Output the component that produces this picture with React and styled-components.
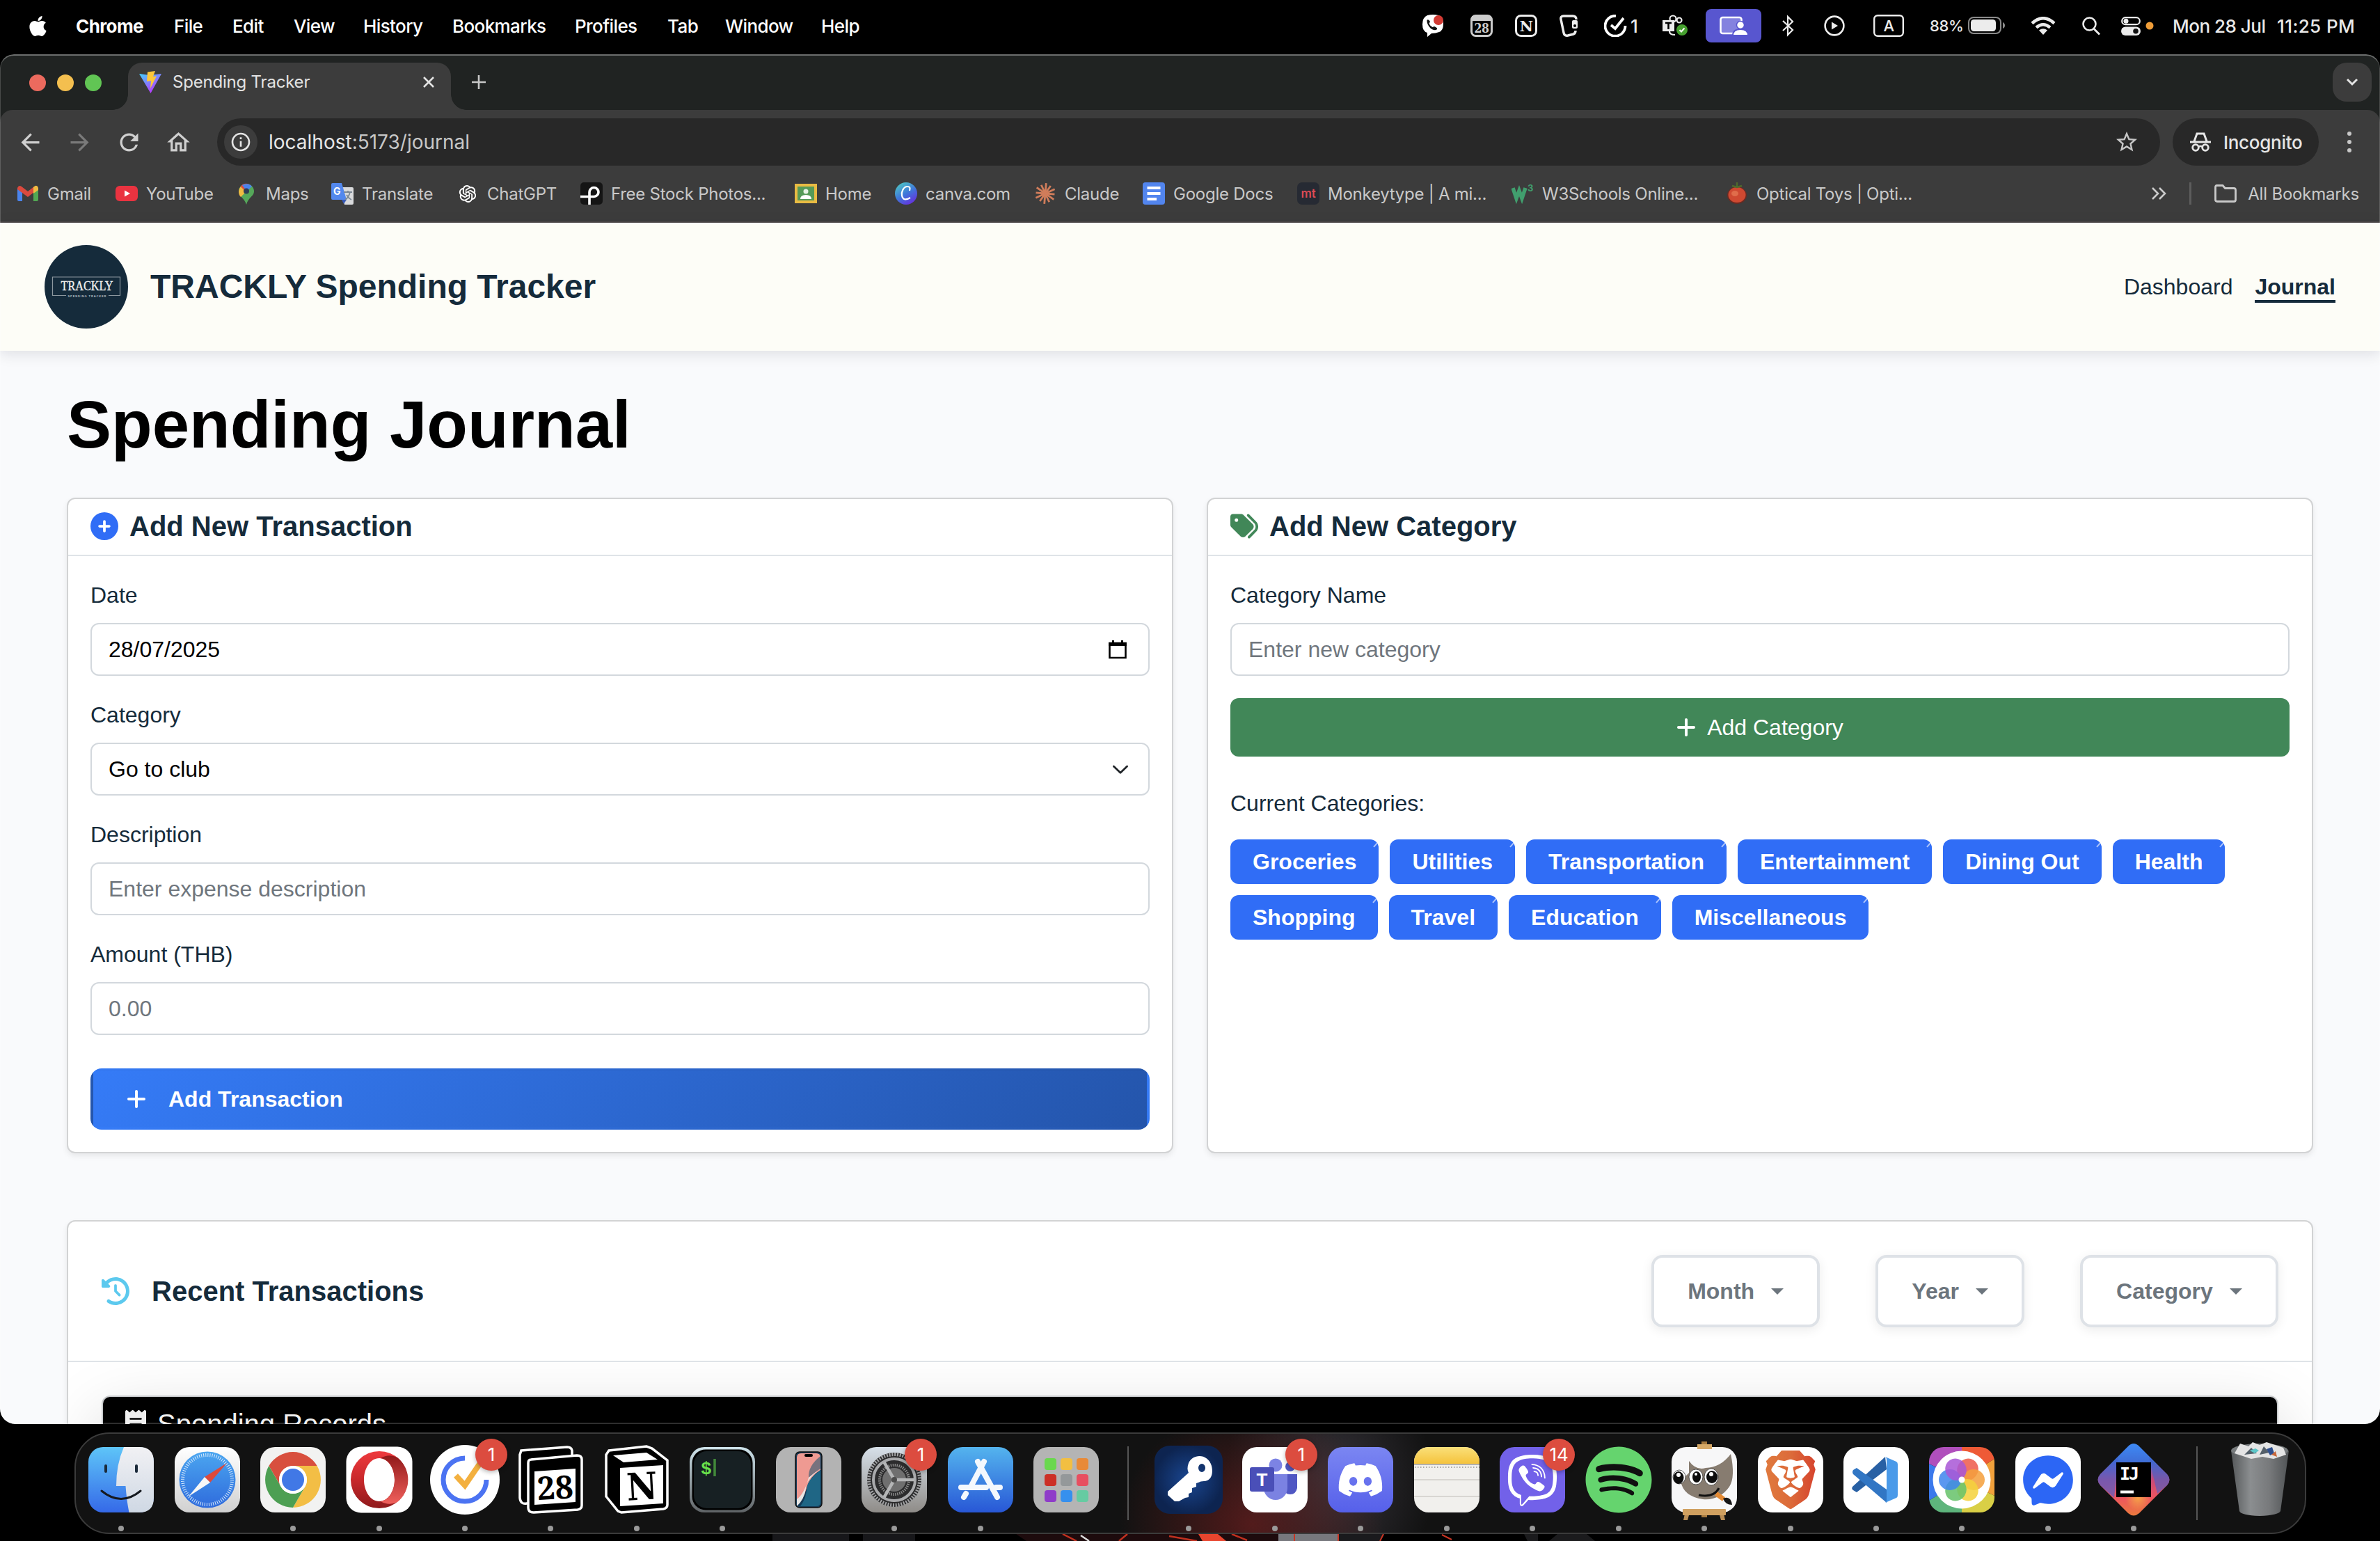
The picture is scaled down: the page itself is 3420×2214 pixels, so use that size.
import React from "react";
import styled, { createGlobalStyle, css } from "styled-components";
import { FaApple, FaDiscord, FaSpotify, FaViber, FaFacebookMessenger } from "react-icons/fa";
import { FaCirclePlus, FaTags, FaPlus, FaClockRotateLeft, FaReceipt } from "react-icons/fa6";
import { MdArrowBack, MdArrowForward, MdRefresh, MdOutlineHome, MdStarBorder, MdInfoOutline } from "react-icons/md";
import { SiBrave } from "react-icons/si";
import { AiOutlineOpenAI } from "react-icons/ai";

const ui = `Inter, "Noto Sans", sans-serif`;
const page = `"Liberation Sans", Arial, sans-serif`;
const navy = "#152b3b";
const blue = "#306df6";
const green = "#418758";

const GlobalStyle = createGlobalStyle`
  *, *::before, *::after { box-sizing: border-box; }
  body { margin: 0; background: #000; overflow: hidden; }
  svg { display: block; flex: none; }
  h1, h2, p { margin: 0; }
`;

const Screen = styled.div`
  width: 3420px;
  height: 2214px;
  display: flex;
  flex-direction: column;
  background: #000;
  overflow: hidden;
  font-family: ${ui};
`;

/* ---------- macOS menu bar ---------- */

const MenuBar = styled.header`
  height: 78px;
  flex: none;
  display: flex;
  align-items: center;
  justify-content: space-between;
  padding: 0 34px 4px 41px;
  color: #fff;
  font-size: 26px;
`;

const MenuGroup = styled.nav`
  display: flex;
  align-items: center;
`;

const MenuItem = styled.span`
  width: ${(p) => p.$w}px;
  flex: none;
  white-space: nowrap;
  font-weight: ${(p) => (p.$bold ? 700 : 500)};
  letter-spacing: ${(p) => p.$ls ?? -0.6}px;
`;

const AppleLogo = styled(FaApple)`
  margin-left: -3px;
`;

const StatusSlot = styled.span`
  width: ${(p) => p.$w}px;
  margin-left: ${(p) => p.$gap}px;
  flex: none;
  display: flex;
  align-items: center;
  justify-content: flex-start;
  white-space: nowrap;
  font-size: ${(p) => p.$size ?? 26}px;
  font-weight: 500;
  letter-spacing: ${(p) => p.$ls ?? -0.5}px;
  color: #e9e9e9;
`;

const ScreenShare = styled.span`
  width: 80px;
  height: 48px;
  margin-left: 26px;
  display: flex;
  align-items: center;
  justify-content: center;
  border-radius: 8px;
  background: #5856cf;
`;

/* ---------- browser ---------- */

const BrowserWindow = styled.section`
  position: relative;
  height: 1968px;
  flex: none;
  display: flex;
  flex-direction: column;
  border-radius: 20px 20px 22px 22px;
  overflow: hidden;
  background: #202322;

  &::after {
    content: "";
    position: absolute;
    inset: 0;
    border-radius: inherit;
    border: 2px solid rgba(255, 255, 255, 0.18);
    border-top-color: rgba(255, 255, 255, 0.34);
    border-left-width: 1px;
    border-right-width: 1px;
    pointer-events: none;
  }
`;

const TabStrip = styled.div`
  height: 80px;
  flex: none;
  display: flex;
  align-items: flex-start;
  padding: 12px 12px 0 42px;
`;

const Lights = styled.div`
  display: flex;
  gap: 16px;
  padding-top: 17px;
  width: 142px;
`;

const Light = styled.i`
  width: 24px;
  height: 24px;
  border-radius: 50%;
  background: ${(p) => p.$c};
`;

const Tab = styled.div`
  position: relative;
  width: 464px;
  height: 68px;
  display: flex;
  align-items: center;
  padding: 0 24px 13px 16px;
  border-radius: 20px 20px 0 0;
  background: #3c3c3c;
  color: #e3e3e3;
  font-size: 24px;

  &::before,
  &::after {
    content: "";
    position: absolute;
    bottom: 0;
    width: 22px;
    height: 22px;
  }
  &::before {
    left: -22px;
    background: radial-gradient(circle at 0 0, transparent 21.5px, #3c3c3c 22px);
  }
  &::after {
    right: -22px;
    background: radial-gradient(circle at 100% 0, transparent 21.5px, #3c3c3c 22px);
  }
`;

const TabTitle = styled.span`
  flex: 1;
  margin-left: 16px;
  letter-spacing: -0.2px;
`;

const NewTab = styled.span`
  margin: 18px 0 0 30px;
`;

const TabSearch = styled.span`
  width: 56px;
  height: 56px;
  margin-left: auto;
  display: flex;
  align-items: center;
  justify-content: center;
  border-radius: 20px;
  background: #3c3c3c;
`;

const Toolbar = styled.div`
  height: 162px;
  flex: none;
  padding-top: 12px;
  border-radius: 18px 18px 0 0;
  border-bottom: 2px solid #4a4646;
  background: #3c3c3c;
`;

const AddressRow = styled.div`
  height: 68px;
  display: flex;
  align-items: center;
  padding: 0 28px 0 24px;
`;

const NavButtons = styled.div`
  width: 288px;
  display: flex;
  gap: 32px;
  color: #cfcfcf;
`;

const NavIcon = styled.span`
  opacity: ${(p) => (p.$dim ? 0.42 : 1)};
`;

const Omnibox = styled.div`
  flex: 1;
  height: 68px;
  display: flex;
  align-items: center;
  padding: 0 30px 0 10px;
  border-radius: 34px;
  background: #282828;
  color: #c7c7c7;
  font-size: 28px;
  letter-spacing: 0;
`;

const SiteInfo = styled.span`
  width: 48px;
  height: 48px;
  margin-right: 16px;
  display: flex;
  align-items: center;
  justify-content: center;
  border-radius: 50%;
  background: #3c3c3c;
  color: #e3e3e3;
`;

const Host = styled.b`
  font-weight: 400;
  color: #e6e6e6;
`;

const Push = styled.span`
  margin-left: auto;
`;

const Incognito = styled.div`
  width: 210px;
  height: 68px;
  margin: 0 32px 0 18px;
  display: flex;
  align-items: center;
  gap: 18px;
  padding-left: 25px;
  border-radius: 34px;
  background: #282828;
  color: #e6e6e6;
  font-size: 26px;
  font-weight: 500;
  letter-spacing: -0.3px;
`;

const BookmarkRow = styled.div`
  height: 80px;
  display: flex;
  align-items: center;
  padding: 0 30px 0 24px;
  color: #c9c9c9;
  font-size: 24px;
`;

const Bookmark = styled.span`
  width: ${(p) => p.$w}px;
  flex: none;
  display: flex;
  align-items: center;
  gap: 12px;
  white-space: nowrap;
  letter-spacing: ${(p) => p.$ls ?? -0.25}px;
`;

const BookmarkEnd = styled.span`
  margin-left: auto;
  display: flex;
  align-items: center;
  white-space: nowrap;
`;

const Separator = styled.i`
  width: 3px;
  height: 32px;
  margin: 0 33px;
  background: #5d5d5d;
`;

const FolderLabel = styled.span`
  margin-left: 16px;
  letter-spacing: -0.2px;
`;

/* ---------- web page ---------- */

const WebPage = styled.main`
  height: 1728px;
  flex: none;
  display: flex;
  flex-direction: column;
  background: #f9fafc;
  color: ${navy};
  font-family: ${page};
  font-size: 32px;
  line-height: 48px;
`;

const SiteHeader = styled.header`
  position: relative;
  height: 184px;
  flex: none;
  display: flex;
  align-items: center;
  padding: 0 64px;
  background: #fdfdf7;
  box-shadow: 0 4px 20px rgba(20, 20, 40, 0.12);
`;

const Brand = styled.span`
  flex: 1;
  margin-left: 32px;
  font-size: 48px;
  font-weight: 700;
`;

const NavLink = styled.a`
  margin-left: 32px;
  line-height: 38px;
  font-weight: ${(p) => (p.$active ? 700 : 400)};
  border-bottom: 4px solid ${(p) => (p.$active ? navy : "transparent")};
  margin-top: 4px;
`;

const Content = styled.div`
  display: flex;
  flex-direction: column;
  padding: 48px 96px 0;
`;

const PageTitle = styled.h1`
  height: 115px;
  margin-bottom: 48px;
  color: #000;
  font-size: 96px;
  line-height: 115px;
  font-weight: 700;
`;

const Columns = styled.div`
  display: grid;
  grid-template-columns: 1fr 1fr;
  gap: 48px;
  height: 942px;
`;

const Card = styled.section`
  display: flex;
  flex-direction: column;
  border: 2px solid #d2d3d4;
  border-radius: 12px;
  background: #fff;
  box-shadow: 0 4px 8px rgba(0, 0, 0, 0.075);
`;

const CardHeader = styled.h2`
  height: 82px;
  display: flex;
  align-items: center;
  gap: 16px;
  padding: 0 32px 2px;
  border-bottom: 2px solid #dfe3e8;
  font-size: 40px;
  font-weight: 700;
`;

const CardBody = styled.div`
  display: flex;
  flex-direction: column;
  padding: 32px;
`;

const Field = styled.label`
  display: flex;
  flex-direction: column;
  gap: 16px;
  margin-bottom: 32px;
`;

const controlBox = css`
  width: 100%;
  height: 76px;
  padding: 0 24px;
  border: 2px solid #d3d8dd;
  border-radius: 12px;
  background: #fff;
  color: #000;
  font: 32px/48px ${page};
`;

const Input = styled.input`
  ${controlBox}
  &::placeholder {
    color: #6f767d;
    opacity: 1;
  }
`;

const Picker = styled.div`
  ${controlBox}
  display: flex;
  align-items: center;
  justify-content: space-between;
`;

const PlusIcon = styled(FaPlus)`
  width: 28px;
`;

const ReceiptIcon = styled(FaReceipt)`
  width: 30px;
`;

const GradientButton = styled.button`
  height: 88px;
  margin-top: 16px;
  display: flex;
  align-items: center;
  gap: 32px;
  padding: 0 48px;
  border: 4px solid transparent;
  border-radius: 16px;
  background: linear-gradient(135deg, #357bf7, #2455ab);
  color: #fff;
  font: 700 32px/48px ${page};
`;

const GreenButton = styled.button`
  height: 84px;
  display: flex;
  align-items: center;
  justify-content: center;
  gap: 16px;
  border: 0;
  border-radius: 12px;
  background: ${green};
  color: #fff;
  font: 32px/48px ${page};
`;

const ListCaption = styled.p`
  margin: 43px 0 28px;
`;

const ChipList = styled.div`
  display: flex;
  flex-wrap: wrap;
  gap: 16px;
`;

const Chip = styled.span`
  position: relative;
  height: 64px;
  padding: 0 32px;
  border-radius: 12px;
  background: ${blue};
  color: #fff;
  font-weight: 700;
  line-height: 64px;

  &::after {
    content: "";
    position: absolute;
    top: 3px;
    right: 3px;
    width: 2px;
    height: 9px;
    background: rgba(255, 255, 255, 0.6);
    transform: rotate(42deg);
  }
`;

const RecentCard = styled(Card)`
  height: 700px;
  margin-top: 96px;
`;

const RecentHeader = styled.div`
  height: 202px;
  flex: none;
  display: flex;
  align-items: center;
  padding: 0 48px;
  border-bottom: 2px solid #dfe3e8;
`;

const RecentTitle = styled.h2`
  flex: 1;
  margin-left: 32px;
  font-size: 40px;
  font-weight: 700;
`;

const FilterGroup = styled.div`
  display: flex;
  gap: 80px;
`;

const Filter = styled.button`
  height: 104px;
  display: flex;
  align-items: center;
  gap: 24.200px;
  padding: 0 48px;
  border: 4px solid #dee2e7;
  border-radius: 16px;
  background: #fff;
  box-shadow: 0 4px 16px rgba(0, 0, 0, 0.08);
  color: #6c757d;
  font: 700 32px/48px ${page};

  &::after {
    content: "";
    border: 9.6px solid transparent;
    border-top-color: currentColor;
    border-bottom: 0;
  }
`;

const RecentBody = styled.div`
  flex: 1;
  padding: 48px;
  overflow: hidden;
`;

const Records = styled.section`
  height: 500px;
  border: 2px solid #c9cbcd;
  border-radius: 12px;
  overflow: hidden;
  background: #fff;
  box-shadow: 0 32px 96px rgba(0, 0, 0, 0.175);
`;

const RecordsHeader = styled.div`
  height: 80px;
  display: flex;
  align-items: center;
  gap: 16px;
  padding: 0 32px 2px;
  background: #000;
  color: #efefef;
  font-size: 40px;
`;

/* ---------- dock ---------- */

const DockArea = styled.footer`
  flex: 1;
  display: flex;
  flex-direction: column;
  align-items: center;
  padding-top: 12px;
`;

const Dock = styled.div`
  width: 3207px;
  height: 146px;
  flex: none;
  display: flex;
  padding: 0 4px;
  border: 2px solid #3b3b3b;
  border-radius: 50px;
  background:
    radial-gradient(ellipse 190px 170px at 1690px 130px, rgba(92, 28, 28, 0.85), transparent),
    radial-gradient(ellipse 150px 180px at 1800px 70px, rgba(70, 66, 76, 0.7), transparent),
    #121212;
`;

const DockCell = styled.div`
  width: 123.45px;
  flex: none;
  display: flex;
  flex-direction: column;
  align-items: center;
  padding-top: 18px;
`;

const IconHolder = styled.div`
  position: relative;
  width: 100px;
  height: 100px;

  & > svg {
    overflow: visible;
  }
`;

const Dot = styled.i`
  width: 8px;
  height: 8px;
  margin-top: 14px;
  border-radius: 50%;
  background: #9a9a9a;
`;

const Badge = styled.span`
  position: absolute;
  top: -11px;
  left: 65px;
  width: 46px;
  height: 46px;
  border-radius: 50%;
  background: #dc4c3f;
  color: #fff;
  font-size: 26px;
  line-height: 46px;
  text-align: center;
  box-shadow: 0 2px 6px rgba(0, 0, 0, 0.3);
`;

const DockDivider = styled.i`
  width: 2px;
  height: 106px;
  margin: 18px ${(p) => p.$r}px 0 ${(p) => p.$l}px;
  flex: none;
  background: #555;
`;

const Favicon = ({ children, box = 32 }) => (
  <svg width="32" height="32" viewBox={`0 0 ${box} ${box}`}>{children}</svg>
);

const menu = [
  ["Chrome", 141, true], ["File", 84], ["Edit", 88], ["View", 100], ["History", 128],
  ["Bookmarks", 176], ["Profiles", 133], ["Tab", 83], ["Window", 138], ["Help", 70],
];

const ViteIcon = () => (
  <Favicon>
    <defs>
      <linearGradient id="vt" x1="0" y1="0" x2="0.6" y2="1"><stop offset="0" stopColor="#41d1ff" /><stop offset="1" stopColor="#bd34fe" /></linearGradient>
    </defs>
    <path d="M0 4 L15 6 L32 4 L16.5 32Z" fill="url(#vt)" />
    <path d="M12 1.5 L23 0 L20 8 L25 7.500 L16 25 L17 14 L11 15Z" fill="#fcc63a" />
  </Favicon>
);

const rays = Array.from({ length: 12 }, (_, i) => i * 30 + 5);

const bookmarks = [
  ["Gmail", 142, <Favicon><path d="M1 8v17q0 2 2 2h5V13z" fill="#4a84ec" /><path d="M31 8v17q0 2-2 2h-5V13z" fill="#52a853" /><path d="M1 8q2-5 6-2l9 7 9-7v8l-9 7-15-11z" fill="#db4a3e" /><path d="M24 7q5-5 7 1v3l-7 5z" fill="#f0bb42" /></Favicon>],
  ["YouTube", 172, <Favicon><rect y="5" width="32" height="22" rx="6" fill="#ea3340" /><path d="M13 11.500v9l8-4.500z" fill="#fff" /></Favicon>],
  ["Maps", 138, <Favicon><path d="M5 13a11 11 0 0 1 22 0c0 7-8 8-11 19C13 22 5 20 5 13z" fill="#55a85a" /><path d="M5 13a11 11 0 0 1 3-7l8 7-8 8q-3-3-3-8z" fill="#f0bb42" /><path d="M7.500 6A11 11 0 0 1 20 2.700L13 11z" fill="#dc4c3f" /><path d="M10 4a11 11 0 0 1 14 1.500L17 13z" fill="#4a84ec" /><circle cx="16" cy="12.500" r="4" fill="#2f3c55" /></Favicon>],
  ["Translate", 180, <Favicon><path d="M13 7h17q2 0 2 2v21q0 2-2 2H19z" fill="#d9dadc" /><path d="M2 1h13l7 24H2q-2 0-2-2V3q0-2 2-2z" fill="#5388ee" /><path d="M15 25h7l-4 6z" fill="#3558b8" /><path d="M18 14h12M24 12v2M27 14q-2 8-7 11M22 18q3 5 7 7" stroke="#7b8794" strokeWidth="1.800" fill="none" /><text x="3" y="18" fontSize="14" fontWeight="700" fill="#fff">G</text></Favicon>],
  ["ChatGPT", 178, <AiOutlineOpenAI size={32} color="#fff" />],
  ["Free Stock Photos...", 308, <Favicon><rect width="32" height="32" rx="5" fill="#151515" /><path d="M13 32V14a6.500 6.500 0 1 1 6.500 6.500H0" stroke="#fff" strokeWidth="3.600" fill="none" /></Favicon>],
  ["Home", 144, <Favicon><rect y="2" width="32" height="28" fill="#e9bb43" /><rect x="4" y="6" width="24" height="20" fill="#569a58" /><circle cx="16" cy="13" r="3.500" fill="#e8f2e6" /><path d="M8 24q0-6 8-6t8 6z" fill="#fff" /></Favicon>],
  ["canva.com", 200, <Favicon><defs><linearGradient id="cv" x1="0.2" y1="0" x2="0.8" y2="1"><stop offset="0" stopColor="#4fc8c4" /><stop offset="0.5" stopColor="#3f77d9" /><stop offset="1" stopColor="#6a2ae0" /></linearGradient></defs><circle cx="16" cy="16" r="16" fill="url(#cv)" /><path d="M21 12q2-6-3-6c-6 0-9 8-8 13q2 9 12 3" stroke="#fff" strokeWidth="2.200" fill="none" /></Favicon>],
  ["Claude", 156, <Favicon>{rays.map((a, i) => <path key={a} d={`M16 16V${i % 2 ? 2.5 : 1}`} stroke="#d07d5b" strokeWidth="2.800" transform={`rotate(${a} 16 16)`} />)}</Favicon>],
  ["Google Docs", 222, <Favicon><rect width="32" height="32" rx="4" fill="#5285ee" /><path d="M6.500 8h19M6.500 16h19M6.500 24H20" stroke="#fff" strokeWidth="4" /></Favicon>],
  ["Monkeytype | A mi...", 308, <Favicon><rect width="32" height="32" rx="7" fill="#262a33" /><text x="16" y="22" textAnchor="middle" fontSize="17" fontWeight="600" fill="#dd4b55">mt</text></Favicon>],
  ["W3Schools Online...", 308, <Favicon><path d="M2 8l5 15 4-11 4 11 5-15" stroke="#419f6e" strokeWidth="5.500" fill="none" /><text x="23" y="13" fontSize="13" fontWeight="700" fill="#419f6e">3</text></Favicon>],
  ["Optical Toys | Opti...", 272, <Favicon><ellipse cx="16" cy="18.500" rx="14" ry="12.500" fill="#6b2a22" /><ellipse cx="16" cy="18" rx="12.500" ry="11" fill="#cf4931" /><ellipse cx="13" cy="16" rx="5" ry="4" fill="#e06d4b" /><path d="M16 0v6M9 5l7 2 7-2" stroke="#4f6a2c" strokeWidth="2.500" fill="none" /></Favicon>],
];

const Sq = ({ fill = "#fff", s = 47 }) => <rect x={-s} y={-s} width={s * 2} height={s * 2} rx={s * 0.45} fill={fill} />;

const Grad = ({ id, stops, x2 = 0, y2 = 1 }) => (
  <linearGradient id={id} x1="0" y1="0" x2={x2} y2={y2}>
    {stops.map((c, i) => <stop key={i} offset={i / (stops.length - 1)} stopColor={c} />)}
  </linearGradient>
);

const chromeWedge = "M-34.600-20A40 40 0 0 1 34.600-20L0-20A20 20 0 0 0-17.300 10Z";

const left = [
  { id: "finder", dot: true, art: <>
    <Grad id="fa" stops={["#5ec5f8", "#3569e8"]} /><Grad id="fb" stops={["#f1f1f4", "#cfd8e4"]} />
    <Sq fill="url(#fa)" />
    <path d="M4-47H26Q47-47 47-26V26Q47 47 26 47H11.500Q8 30 6.500 9H-7Q-7-22 4-47Z" fill="url(#fb)" />
    <path d="M-22-20v8M22-20v8" stroke="#1b2a3a" strokeWidth="4" strokeLinecap="round" />
    <path d="M-28 16Q0 39 28 16" stroke="#15191f" strokeWidth="3" fill="none" strokeLinecap="round" /></> },
  { id: "safari", art: <>
    <Grad id="sa" stops={["#fff", "#d0d0d0"]} /><Grad id="sb" stops={["#4ba6f0", "#2f6bdc"]} />
    <Sq fill="url(#sa)" /><circle r="40.500" fill="url(#sb)" />
    <circle r="35.500" fill="none" stroke="#d9ebfc" strokeWidth="5" strokeDasharray="1 2.100" />
    <path d="M28-24L4 4L-4-4Z" fill="#dd4a3c" /><path d="M-27 24L-4-4L4 4Z" fill="#f7f7f7" /></> },
  { id: "chrome", dot: true, art: <>
    <Sq fill="#f2f2f1" />
    <path d={chromeWedge} fill="#d84f3e" /><path d={chromeWedge} fill="#f3be45" transform="rotate(120)" /><path d={chromeWedge} fill="#4d9f53" transform="rotate(240)" />
    <circle r="20" fill="#fff" /><circle r="16" fill="#4178e6" /></> },
  { id: "opera", dot: true, art: <>
    <Grad id="op" stops={["#ee3a3e", "#c8282b", "#8f1a1c"]} /><Grad id="oq" stops={["#921a1a", "#f0605c"]} />
    <Sq s={47.5} />
    <path fillRule="evenodd" d="M0-41A41 41 0 1 0 0 41A41 41 0 1 0 0-41ZM0-31C13-31 22-16 22 0S13 31 0 31S-22 16-22 0S-13-31 0-31Z" fill="url(#op)" />
    <path d="M2-31Q14-38 26-32A41 41 0 0 1 26 32Q14 38 2 31C14 29 22 16 22 0S14-29 2-31Z" fill="url(#oq)" /></> },
  { id: "ticktick", dot: true, badge: "1", art: <>
    <circle r="50" fill="#fff" />
    <path d="M0-31A31 31 0 1 0 31 0" fill="none" stroke="#4b73f2" strokeWidth="7" />
    <path d="M-13-6L0 8L22-24" fill="none" stroke="#f3b03f" strokeWidth="8" /></> },
  { id: "notioncal", dot: true, art: <>
    <path d="M-42-42L24-47Q30-47 31-42V28L-34 34Q-43 36-44 26V-36Z" fill="#000" stroke="#fff" strokeWidth="3.500" />
    <path d="M-28-29L38-35Q45-35 45-29V37Q45 42 39 43L-24 47Q-32 47-32 40V-24Q-32-29-28-29Z" fill="#000" stroke="#fff" strokeWidth="3.500" />
    <path d="M-23-12L36-16V32L-23 36Z" fill="#fff" />
    <text x="6" y="28" textAnchor="middle" fontFamily="Noto Serif, DejaVu Serif, serif" fontSize="46" fontWeight="700" textLength="52" lengthAdjust="spacingAndGlyphs" transform="rotate(-3)" fill="#000">28</text></> },
  { id: "notion", dot: true, art: <>
    <path d="M-40-42L14-48L22-45L44-28V36Q44 41 38 42L-22 47L-27 45L-44 24V-36Z" fill="#000" stroke="#fff" strokeWidth="3.500" />
    <path d="M-34-35L14-39L30-29L-19-25Z" fill="#fff" /><path d="M-24-17L38-21V34L-24 38Z" fill="#fff" />
    <text x="7" y="29" textAnchor="middle" fontFamily="DejaVu Serif, serif" fontSize="54" fontWeight="700" textLength="44" lengthAdjust="spacingAndGlyphs" transform="rotate(-3)" fill="#000">N</text></> },
  { id: "terminal", dot: true, art: <>
    <Grad id="tm" stops={["#cfe4ec", "#5f6366"]} /><Sq fill="url(#tm)" /><Sq s={43.5} fill="#000" /><Sq s={41} fill="#172023" />
    <text x="-31" y="-8" fontFamily="Liberation Mono, monospace" fontSize="26" fontWeight="700" fill="#68e04b">$</text>
    <path d="M-11-30v25" stroke="#42883a" strokeWidth="3.500" /></> },
  { id: "iphone", art: <>
    <Sq fill="#b3b3b3" /><rect x="-19" y="-40" width="38" height="80" rx="6" fill="#163b58" />
    <path d="M-17-32q0-6 6-6h22q6 0 6 6V-14Q2-5-3 12Q-8 30-17 32Z" fill="#ef9a92" />
    <path d="M17-34Q-1-20 0-3Q8-10 17-16Z" fill="#77727e" /><path d="M17-16Q-4 0-4 12Q-6 28-17 38V28Q-6 20 0-3Q8-10 17-16Z" fill="#e8e6e4" /><path d="M17-14Q-2 0-3 13Q-3 26-12 38H11q6 0 6-6Z" fill="#1f6685" />
    <rect x="-19" y="-40" width="38" height="80" rx="6" fill="none" stroke="#111" strokeWidth="1.500" /><rect x="-6" y="-37" width="12" height="4" rx="2" fill="#000" /></> },
  { id: "settings", dot: true, badge: "1", art: <>
    <Grad id="st" stops={["#d7e0e9", "#8f8c88"]} /><Sq fill="url(#st)" />
    <circle r="39" fill="#2c2c2d" /><circle r="36.500" fill="none" stroke="#a2a3a5" strokeWidth="5" strokeDasharray="2 1.820" /><circle r="30" fill="none" stroke="#a9aaac" strokeWidth="4" />
    <circle r="21" fill="none" stroke="#8a8a8a" strokeWidth="4" strokeDasharray="1.500 1.500" /><circle r="17" fill="#6f6f6f" />
    <path d="M0 0H29M0 0L-14.500-25M0 0L-14.500 25" stroke="#b4b5b6" strokeWidth="4.500" /><circle r="4" fill="#4d4d4d" /></> },
  { id: "appstore", dot: true, art: <>
    <Grad id="as" stops={["#54b4ee", "#2857d6"]} /><Sq fill="url(#as)" />
    <g stroke="#f4f8fd" strokeWidth="8" strokeLinecap="round"><path d="M5-26L-14 10M-4-26L24 25M-28 11H8M22 11H28M-21 20L-24 25" /></g></> },
  { id: "launchpad", art: <>
    <Sq fill="#b4b4b4" />
    {["#6ad84e", "#f2bf42", "#e88a38", "#cc3026", "#94989a", "#e74f60", "#8f3cc9", "#3690ee", "#66cba2"].map((c, i) => (
      <rect key={c} x={-31 + (i % 3) * 23} y={-31 + Math.floor(i / 3) * 23} width="17" height="17" rx="4" fill={c} />))}</> },
];

const petals = ["#ee5a4c", "#f4a03c", "#f4d23c", "#66c36a", "#3f86ee", "#a957d6"];

const right = [
  { id: "key", dot: true, art: <>
    <radialGradient id="ky"><stop offset="0" stopColor="#1a4792" /><stop offset="1" stopColor="#0d2450" /></radialGradient>
    <Sq fill="url(#ky)" s={49} />
    <path fillRule="evenodd" d="M0-24C6-38 28-38 33-20C36-8 32 2 22 2Q17 2 14 4L11 5V10L5 12V18L0 20V25L-5 26L-14 31L-20 31L-30 22V17L0-10Q-3-16 0-24ZM19-23A5 6 0 1 0 19-11A5 6 0 1 0 19-23Z" fill="#fff" /></> },
  { id: "teams", dot: true, badge: "1", art: <>
    <Sq /><circle cx="1" cy="-21" r="9.500" fill="#7c83e4" /><circle cx="22" cy="-19" r="7" fill="#5057c3" />
    <path d="M12-8H32V12Q30 21 22 21T12 12Z" fill="#5057c3" /><path d="M-14-8H18V12A17 17 0 0 1-16 12Z" fill="#7b82e2" />
    <rect x="-36" y="-18" width="35" height="35" rx="3" fill="#4a4fb8" /><text x="-18.500" y="9" textAnchor="middle" fontFamily="Liberation Sans, sans-serif" fontWeight="700" fontSize="26" fill="#fff">T</text></> },
  { id: "discord", dot: true, art: <><Grad id="dc" stops={["#7b86f2", "#5660ea"]} /><Sq fill="url(#dc)" /><FaDiscord x={-34} y={-34} size={68} color="#fff" /></> },
  { id: "notes", dot: true, art: <>
    <clipPath id="nc"><rect x="-47" y="-47" width="94" height="94" rx="21" /></clipPath><Grad id="nt" stops={["#fae07a", "#f5c33c"]} />
    <g clipPath="url(#nc)"><rect x="-47" y="-47" width="94" height="94" fill="#f1f0ed" /><rect x="-47" y="-47" width="94" height="24" fill="url(#nt)" />
      <path d="M-47-22H47" stroke="#b3b0aa" strokeWidth="2" /><path d="M-46-18H47" stroke="#a9a7a2" strokeWidth="2" strokeDasharray="1.500 2.500" /><path d="M-47 0H47M-47 24H47" stroke="#cfcdc9" strokeWidth="1.500" /></g></> },
  { id: "viber", dot: true, badge: "14", art: <><Sq fill="#7261e9" /><FaViber x={-37} y={-36} size={74} color="#fff" /></> },
  { id: "spotify", dot: true, art: <><circle r="46" fill="#101010" /><FaSpotify x={-49} y={-49} size={98} color="#65d46e" /></> },
  { id: "gimp", dot: true, art: <>
    <path d="M-26 40l-4 18h6l5-18zM26 40l4 18h-6l-5-18z" fill="#b98d55" /><rect x="-4" y="-55" width="8" height="109" fill="#a5793f" /><Sq fill="#f7f7f8" />
    <rect x="-10" y="-51" width="21" height="7" fill="#d6a968" /><rect x="-31" y="42" width="62" height="9" rx="1" fill="#d0a060" />
    <path d="M-22-27Q-12-13 2-17Q24-18 38-37Q45-4 36 10Q22 30-2 28Q-30 24-34 2L-22-10Z" fill="#877c70" />
    <g fill="#fff" stroke="#333" strokeWidth="0.800"><ellipse cx="-36" cy="-4" rx="9" ry="10" /><ellipse cx="-12" cy="-4" rx="10" ry="11" /><ellipse cx="10" cy="-4" rx="10" ry="12" /></g>
    <ellipse cx="-37" cy="-3" rx="7.500" ry="9" fill="#0c0c0c" /><ellipse cx="-11" cy="-4" rx="6" ry="8" fill="#0c0c0c" /><ellipse cx="11" cy="-4" rx="8" ry="9" fill="#0c0c0c" /><circle cx="-37" cy="-7" r="3" fill="#fff" /><circle cx="-12" cy="-8" r="2" fill="#fff" /><circle cx="10" cy="-8" r="3" fill="#fff" />
    <path d="M-8 22Q14 26 21 12" stroke="#111" strokeWidth="3" fill="none" /><path d="M17 20L28 28" stroke="#e48a33" strokeWidth="7" /><path d="M27 27Q38 22 40 36Q30 36 27 27Z" fill="#161616" /></> },
  { id: "brave", dot: true, art: <><Grad id="br" x2={1} y2={0} stops={["#e07a3e", "#dc6b3a", "#d6442e"]} /><Sq /><SiBrave x={-42} y={-42} size={84} fill="url(#br)" /></> },
  { id: "vscode", dot: true, art: <>
    <Sq /><path d="M13-33L-34 10Q-36 13-33 15L-28 18L15-15Z" fill="#2860a4" /><path d="M-33-14L-28-17L15 14V33L-33-8Q-35-11-33-14Z" fill="#3176c4" /><path d="M13-33L29-26Q31-25 31-22V22Q31 25 29 26L13 33Q15 32 15 28V-28Q15-32 13-33Z" fill="#4a9ae9" /></> },
  { id: "photos", dot: true, art: <>
    <clipPath id="pc"><rect x="-47" y="-47" width="94" height="94" rx="21" /></clipPath>
    <g clipPath="url(#pc)"><path d="M0 0L-47-23V-47H0Z" fill="#b04fbc" /><path d="M0 0V-47H47V-30Z" fill="#ee5a36" /><path d="M0 0L47-30V23Z" fill="#f1a13c" /><path d="M0 0L47 23V47H0Z" fill="#d9cf46" /><path d="M0 0V47H-47V30Z" fill="#5eb57c" /><path d="M0 0L-47 30V-23Z" fill="#3b79ec" /></g>
    <circle r="41.500" fill="#fff" />
    {petals.map((c, i) => <ellipse key={c} cx="0" cy="-17" rx="15" ry="16" fill={c} opacity="0.86" transform={`rotate(${30 + i * 60})`} />)}
    <circle r="4.500" fill="#fff" /></> },
  { id: "messenger", dot: true, art: <><Sq /><FaFacebookMessenger x={-37} y={-36} size={74} color="#2c66f5" /></> },
  { id: "intellij", dot: true, art: <>
    <Grad id="ij" stops={["#3e8af5", "#3f6fd8", "#c64a78", "#ee5560", "#ea7a3d"]} />
    <radialGradient id="ik"><stop offset="0" stopColor="#f4a545" /><stop offset="1" stopColor="#f4a54500" /></radialGradient>
    <path d="M-8-48Q0-56 8-48L48-8Q55 0 48 8L8 48Q0 55-8 48L-48 8Q-55 0-48-8Z" fill="url(#ij)" />
    <path d="M-22-32L-48-8Q-55 0-48 8L-28 26Z" fill="#4560d0" opacity="0.600" /><path d="M22-32L48-8Q55 0 48 8L34 20Z" fill="#4560c8" opacity="0.600" /><circle cx="6" cy="26" r="18" fill="url(#ik)" />
    <rect x="-25" y="-25" width="50" height="50" fill="#000" /><text x="-20" y="0" fontFamily="DejaVu Sans Mono, monospace" fontWeight="700" fontSize="25" letterSpacing="-2" fill="#fff">IJ</text><path d="M-19 17.500H0" stroke="#fff" strokeWidth="4" /></> },
];

const trash = <>
  <Grad id="tr" x2={1} y2={0} stops={["#55585a", "#8b8e90", "#77797b", "#505355"]} />
  <path d="M-41-42L-29 45Q-27 51 0 52Q27 51 30 45L42-42Q0-26-41-42Z" fill="url(#tr)" />
  <ellipse cy="-42" rx="41" ry="10" fill="#777b7d" />
  <path d="M-36-38L-28-52L-16-48L-10-54L0-50L10-54L22-50L34-46L38-36L20-30L4-33L-12-30Z" fill="#e4e4e4" />
  <path d="M-22-36l10-10 8 8zM0-36l6-12 8 9z" fill="#55606a" /><path d="M-14-42l8-3 5 3-6 4z" fill="#5cc6c8" /><path d="M10-44l8-3 3 9-6 3z" fill="#2f4f8e" /><path d="M17-36l6-5 2 8z" fill="#c8673a" />
</>;

const DockApp = ({ app }) => (
  <DockCell>
    <IconHolder>
      <svg width="100" height="100" viewBox="-50 -48 100 100" overflow="visible">{app.art}</svg>
      {app.badge && <Badge>{app.badge}</Badge>}
    </IconHolder>
    {app.dot && <Dot />}
  </DockCell>
);

const stroke = { fill: "none", stroke: "#ececec", strokeWidth: 3 };

const StatusIcons = () => (
  <MenuGroup>
    <StatusSlot $w={32} $gap={0}><svg width="32" height="32" viewBox="0 0 32 32"><path d="M8 1Q16-1 24 1Q31 3 31 13T25 25Q20 27 14 27L8 32V26Q1 24 1 14T8 1Z" fill="#fff" /><path d="M7.500 8q2-2 4.500 2l-1.500 3q2 4 5 5l2.500-1q5 2 4 4-3 3-9-1Q7 14 7.500 8z" fill="#111" /><circle cx="24" cy="8" r="7" fill="#d23a33" /></svg></StatusSlot>
    <StatusSlot $w={32} $gap={38}><svg width="32" height="32" viewBox="0 0 32 32"><rect x="1.500" y="1.500" width="29" height="29" rx="6" {...stroke} stroke="#ccc" /><path d="M2 2h28v7H2z" fill="#ccc" /><text x="16" y="26" textAnchor="middle" fontFamily="DejaVu Serif, serif" fontWeight="700" fontSize="19" textLength="21" lengthAdjust="spacingAndGlyphs" fill="#ccc">28</text></svg></StatusSlot>
    <StatusSlot $w={32} $gap={32}><svg width="32" height="32" viewBox="0 0 32 32"><rect x="1.500" y="1.500" width="29" height="29" rx="7" {...stroke} /><text x="16" y="24" textAnchor="middle" fontFamily="DejaVu Serif, serif" fontWeight="700" fontSize="21" fill="#ececec">N</text></svg></StatusSlot>
    <StatusSlot $w={28} $gap={32}><svg width="28" height="32" viewBox="0 0 28 32"><path d="M24 7Q24 2 19 2H6Q1 2 2 7L6 26Q7 31 12 30L20 28Q23 27 23 23" {...stroke} strokeWidth="3.500" /><rect x="18" y="8" width="8" height="12" rx="2" fill="#ececec" /><circle cx="22" cy="16" r="2" fill="#000" /></svg></StatusSlot>
    <StatusSlot $w={50} $gap={36}><svg width="38" height="32" viewBox="0 0 38 32"><path d="M17 1.800A14.500 14.500 0 1 0 30.500 16M10 15L16 20L28 5" {...stroke} stroke="#fff" strokeWidth="3.800" /></svg>1</StatusSlot>
    <StatusSlot $w={36} $gap={34}><svg width="36" height="32" viewBox="0 0 36 32"><circle cx="15" cy="6" r="4.500" {...stroke} strokeWidth="2.200" /><circle cx="24" cy="8" r="3.500" {...stroke} strokeWidth="2.200" /><path d="M10 24q0 5 8 5" {...stroke} strokeWidth="2.200" /><rect y="8" width="17" height="16" fill="#ececec" /><path d="M4 12h9M8.500 12v9" stroke="#000" strokeWidth="2.600" /><circle cx="28" cy="22" r="8" fill="#46a02f" /><path d="M24.500 22l2.500 2.500 4.500-5" stroke="#fff" strokeWidth="2" fill="none" /></svg></StatusSlot>
    <ScreenShare><svg width="40" height="28" viewBox="0 0 40 28"><rect x="1.500" y="2" width="30" height="23" rx="3" fill="#8482df" stroke="#fff" strokeWidth="2.600" /><path d="M19 28q0-9 11-9t11 9z" fill="#fff" stroke="#5856cf" strokeWidth="2" /><circle cx="30" cy="13" r="5.500" fill="#fff" stroke="#5856cf" strokeWidth="1.500" /></svg></ScreenShare>
    <StatusSlot $w={28} $gap={26}><svg width="28" height="32" viewBox="0 0 28 32"><path d="M5 9L19 22L12 29V3L19 10L5 23" {...stroke} strokeWidth="2.200" /></svg></StatusSlot>
    <StatusSlot $w={30} $gap={36}><svg width="30" height="30" viewBox="0 0 30 30"><circle cx="15" cy="15" r="13.400" {...stroke} strokeWidth="2.600" /><path d="M11 9.500v11l9-5.500z" fill="#ececec" /></svg></StatusSlot>
    <StatusSlot $w={44} $gap={41}><svg width="44" height="32" viewBox="0 0 44 32"><rect x="1.200" y="1.200" width="41.600" height="29.600" rx="5" {...stroke} strokeWidth="2.400" /><text x="22" y="24" textAnchor="middle" fontSize="22" fontWeight="500" fill="#ececec">A</text></svg></StatusSlot>
    <StatusSlot $w={55} $gap={37} $size={22} $ls={-0.4}>88%</StatusSlot>
    <StatusSlot $w={54} $gap={0}><svg width="54" height="26" viewBox="0 0 54 26"><rect x="1" y="1" width="46" height="23" rx="7" fill="none" stroke="#8a8a8a" strokeWidth="2" /><rect x="4" y="4" width="36" height="17" rx="4.500" fill="#ececec" /><path d="M50 8q3 1.500 3 4.500t-3 4.500z" fill="#8a8a8a" /></svg></StatusSlot>
    <StatusSlot $w={36} $gap={36}><svg width="36" height="26" viewBox="0 0 36 26"><path d="M2 9.500Q18-5 34 9.500M8 15.500Q18 7 28 15.500" {...stroke} strokeWidth="4.500" /><path d="M12 19.500Q18 15 24 19.500L18 26Z" fill="#ececec" /></svg></StatusSlot>
    <StatusSlot $w={26} $gap={38}><svg width="26" height="27" viewBox="0 0 26 27"><circle cx="10.500" cy="10.500" r="9" {...stroke} strokeWidth="2.600" /><path d="M17 17.500l8 8" {...stroke} strokeWidth="2.800" /></svg></StatusSlot>
    <StatusSlot $w={28} $gap={30}><svg width="28" height="27" viewBox="0 0 28 27"><rect x="1.200" y="1.200" width="25.600" height="10" rx="5" {...stroke} strokeWidth="2.200" /><circle cx="7" cy="6.200" r="3.500" fill="#ececec" /><rect y="14.500" width="28" height="12.500" rx="6.200" fill="#ececec" /><circle cx="21" cy="20.700" r="3.800" fill="#111" /></svg></StatusSlot>
    <StatusSlot $w={12} $gap={7}><svg width="12" height="12"><circle cx="6" cy="6" r="5.500" fill="#ef9d38" /></svg></StatusSlot>
    <StatusSlot $w={150} $gap={27} $ls={-0.5}>Mon 28 Jul</StatusSlot>
    <StatusSlot $w={114} $gap={0} $ls={0.4}>11:25 PM</StatusSlot>
  </MenuGroup>
);

const LogoMark = () => (
  <svg width="120" height="120" viewBox="0 0 120 120">
    <circle cx="60" cy="60" r="60" fill={navy} />
    <path d="M31 72.500H11.500V46H108.500V72.500H92" fill="none" stroke="#8d989f" strokeWidth="1.200" />
    <text x="61" y="65" textAnchor="middle" fontFamily="Liberation Serif, serif" fontSize="18" textLength="75" lengthAdjust="spacingAndGlyphs" fill="#f0f0ee" stroke="#f0f0ee" strokeWidth="0.300">TRACKLY</text>
    <text x="61" y="74.500" textAnchor="middle" fontFamily="Liberation Sans, sans-serif" fontSize="4" fontWeight="700" textLength="55" fill="#b7bfc4">SPENDING TRACKER</text>
  </svg>
);

const chips = ["Groceries", "Utilities", "Transportation", "Entertainment", "Dining Out", "Health", "Shopping", "Travel", "Education", "Miscellaneous"];

export default function App() {
  return (
    <Screen>
      <GlobalStyle />
      <MenuBar>
        <MenuGroup>
          <MenuItem $w={68}><AppleLogo size={33} /></MenuItem>
          {menu.map(([label, w, bold]) => <MenuItem key={label} $w={w} $bold={bold}>{label}</MenuItem>)}
        </MenuGroup>
        <StatusIcons />
      </MenuBar>

      <BrowserWindow>
        <TabStrip>
          <Lights><Light $c="#ec6a5e" /><Light $c="#f4bf4f" /><Light $c="#61c554" /></Lights>
          <Tab>
            <ViteIcon />
            <TabTitle>Spending Tracker</TabTitle>
            <svg width="16" height="16" viewBox="0 0 16 16"><path d="M1 1l14 14M15 1L1 15" stroke="#e3e3e3" strokeWidth="2.600" /></svg>
          </Tab>
          <NewTab><svg width="20" height="20" viewBox="0 0 20 20"><path d="M10 0v20M0 10h20" stroke="#c7c7c7" strokeWidth="2.600" /></svg></NewTab>
          <TabSearch><svg width="18" height="12" viewBox="0 0 18 12"><path d="M2 2l7 7 7-7" stroke="#e3e3e3" strokeWidth="3" fill="none" /></svg></TabSearch>
        </TabStrip>
        <Toolbar>
          <AddressRow>
            <NavButtons>
              <NavIcon><MdArrowBack size={39} /></NavIcon>
              <NavIcon $dim><MdArrowForward size={39} /></NavIcon>
              <NavIcon><MdRefresh size={39} /></NavIcon>
              <NavIcon><MdOutlineHome size={39} /></NavIcon>
            </NavButtons>
            <Omnibox>
              <SiteInfo><MdInfoOutline size={32} /></SiteInfo>
              <span><Host>localhost</Host>:5173/journal</span>
              <Push><MdStarBorder size={36} /></Push>
            </Omnibox>
            <Incognito>
              <svg width="30" height="28" viewBox="0 0 30 28"><path d="M0 14h30M6 13L10 2h10l4 11" stroke="#e6e6e6" strokeWidth="3" fill="none" /><circle cx="8" cy="22" r="4.300" fill="none" stroke="#e6e6e6" strokeWidth="2.800" /><circle cx="22" cy="22" r="4.300" fill="none" stroke="#e6e6e6" strokeWidth="2.800" /><path d="M12 21q3-2 6 0" stroke="#e6e6e6" strokeWidth="2.400" fill="none" /></svg>
              Incognito
            </Incognito>
            <svg width="28" height="32" viewBox="0 0 28 32"><g fill="#c7c7c7"><circle cx="12" cy="4" r="3" /><circle cx="12" cy="16" r="3" /><circle cx="12" cy="28" r="3" /></g></svg>
          </AddressRow>
          <BookmarkRow>
            {bookmarks.map(([label, w, icon]) => <Bookmark key={label} $w={w}>{icon}{label}</Bookmark>)}
            <BookmarkEnd>
              <svg width="22" height="18" viewBox="0 0 22 18"><path d="M2 1l8 8-8 8M12 1l8 8-8 8" stroke="#c9c9c9" strokeWidth="2.600" fill="none" /></svg>
              <Separator />
              <svg width="32" height="26" viewBox="0 0 32 26"><path d="M3.500 1.500H12l3.500 4H28q2.500 0 2.500 2.500v14q0 2.500-2.500 2.500H4q-2.500 0-2.500-2.500V4q0-2.500 2-2.500z" fill="none" stroke="#c9c9c9" strokeWidth="2.800" /></svg>
              <FolderLabel>All Bookmarks</FolderLabel>
            </BookmarkEnd>
          </BookmarkRow>
        </Toolbar>

        <WebPage>
          <SiteHeader>
            <LogoMark />
            <Brand>TRACKLY Spending Tracker</Brand>
            <NavLink>Dashboard</NavLink>
            <NavLink $active>Journal</NavLink>
          </SiteHeader>
          <Content>
            <PageTitle>Spending Journal</PageTitle>
            <Columns>
              <Card>
                <CardHeader><FaCirclePlus size={40} color={blue} />Add New Transaction</CardHeader>
                <CardBody>
                  <Field>Date
                    <Picker>28/07/2025
                      <svg width="36" height="30" viewBox="0 0 36 30"><path d="M4.500 6h23v21H4.500z" fill="none" stroke="#000" strokeWidth="2.600" /><path d="M3.200 5h25.600v5H3.200zM8 2h3v4H8zM21 2h3v4h-3z" fill="#000" /></svg>
                    </Picker>
                  </Field>
                  <Field>Category
                    <Picker>Go to club<svg width="32" height="32" viewBox="0 0 16 16"><path d="M3.200 6l4.800 4.600 4.800-4.600" fill="none" stroke="#212529" strokeWidth="1.400" strokeLinecap="round" strokeLinejoin="round" /></svg></Picker>
                  </Field>
                  <Field>Description<Input placeholder="Enter expense description" /></Field>
                  <Field>Amount (THB)<Input placeholder="0.00" /></Field>
                  <GradientButton><PlusIcon size={32} />Add Transaction</GradientButton>
                </CardBody>
              </Card>
              <Card>
                <CardHeader><FaTags size={40} color={green} />Add New Category</CardHeader>
                <CardBody>
                  <Field>Category Name<Input placeholder="Enter new category" /></Field>
                  <GreenButton><PlusIcon size={32} />Add Category</GreenButton>
                  <ListCaption>Current Categories:</ListCaption>
                  <ChipList>{chips.map((c) => <Chip key={c}>{c}</Chip>)}</ChipList>
                </CardBody>
              </Card>
            </Columns>
            <RecentCard>
              <RecentHeader>
                <FaClockRotateLeft size={40} color="#5cc9ee" />
                <RecentTitle>Recent Transactions</RecentTitle>
                <FilterGroup><Filter>Month</Filter><Filter>Year</Filter><Filter>Category</Filter></FilterGroup>
              </RecentHeader>
              <RecentBody>
                <Records><RecordsHeader><ReceiptIcon size={40} />Spending Records</RecordsHeader></Records>
              </RecentBody>
            </RecentCard>
          </Content>
        </WebPage>
      </BrowserWindow>

      <DockArea>
        <Dock>
          {left.map((a) => <DockApp key={a.id} app={a} />)}
          <DockDivider $l={26} $r={25} />
          {right.map((a) => <DockApp key={a.id} app={a} />)}
          <DockDivider $l={28} $r={27} />
          <DockApp app={{ art: trash }} />
        </Dock>
        <svg width="3420" height="10" viewBox="0 0 3420 10">
          <path d="M1110 0h110v10h-110zM1240 0h75v10h-75z" fill="#17171a" />
          <path d="M1460 0h60l20 10h-65zM1510 0h327v10h-320z" fill="#1d0b0d" />
          <path d="M1527 0l20 10M1620 0l-12 10M1680 3l40 7M1770 0l22 9" stroke="#c0301f" strokeWidth="2.500" />
          <path d="M1722 0h28l12 10h-34z" fill="#e8452e" /><path d="M1553 2l12 8" stroke="#ddd" strokeWidth="2.500" />
          <path d="M1837 0h86v10h-86z" fill="#77787d" /><path d="M1923 0h66l-6 10h-60z" fill="#1a1a1d" /><path d="M1860 0v10M1923 0v10M1988 0l-5 10M2072 1l14 7" stroke="#c93524" strokeWidth="2" />
          <path d="M2190 0h20v10h-15zM2238 0h42l12 10h-66z" fill="#1b1b1d" />
        </svg>
      </DockArea>
    </Screen>
  );
}
